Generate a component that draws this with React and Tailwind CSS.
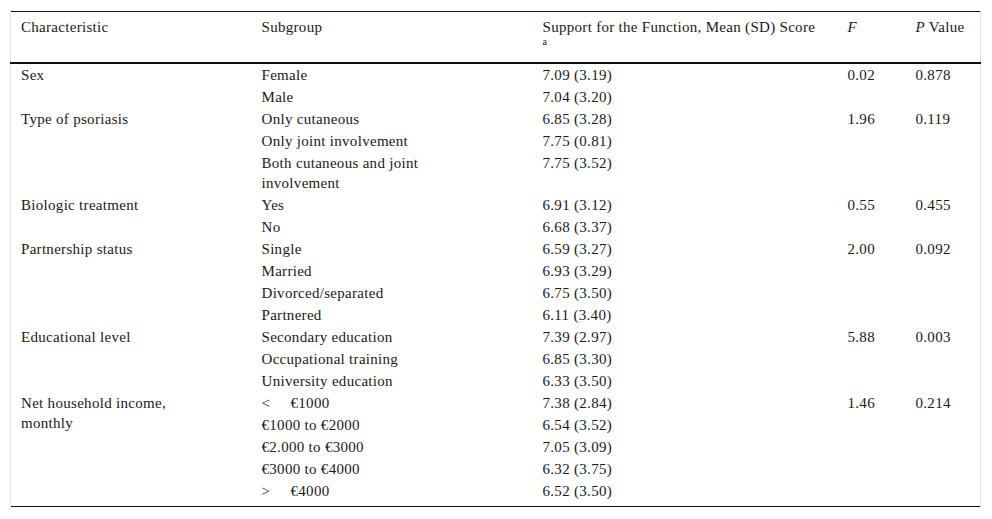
import React from 'react';

// Rows of the psoriasis support table
const groups = [
  {
    name: 'Sex',
    f: '0.02',
    p: '0.878',
    rows: [
      ['Female', '7.09 (3.19)'],
      ['Male', '7.04 (3.20)'],
    ],
  },
  {
    name: 'Type of psoriasis',
    f: '1.96',
    p: '0.119',
    rows: [
      ['Only cutaneous', '6.85 (3.28)'],
      ['Only joint involvement', '7.75 (0.81)'],
      ['Both cutaneous and joint involvement', '7.75 (3.52)'],
    ],
  },
  {
    name: 'Biologic treatment',
    f: '0.55',
    p: '0.455',
    rows: [
      ['Yes', '6.91 (3.12)'],
      ['No', '6.68 (3.37)'],
    ],
  },
  {
    name: 'Partnership status',
    f: '2.00',
    p: '0.092',
    rows: [
      ['Single', '6.59 (3.27)'],
      ['Married', '6.93 (3.29)'],
      ['Divorced/separated', '6.75 (3.50)'],
      ['Partnered', '6.11 (3.40)'],
    ],
  },
  {
    name: 'Educational level',
    f: '5.88',
    p: '0.003',
    rows: [
      ['Secondary education', '7.39 (2.97)'],
      ['Occupational training', '6.85 (3.30)'],
      ['University education', '6.33 (3.50)'],
    ],
  },
  {
    name: 'Net household income, monthly',
    f: '1.46',
    p: '0.214',
    rows: [
      [{ sign: '<', amount: '€1000' }, '7.38 (2.84)'],
      ['€1000 to €2000', '6.54 (3.52)'],
      ['€2.000 to €3000', '7.05 (3.09)'],
      ['€3000 to €4000', '6.32 (3.75)'],
      [{ sign: '>', amount: '€4000' }, '6.52 (3.50)'],
    ],
  },
];

const Subgroup = ({ value }) => {
  if (typeof value === 'string') return <div className="max-w-[190px]">{value}</div>;
  return (
    <div>
      <span className="inline-block w-[29px]">{value.sign}</span>
      {value.amount}
    </div>
  );
};

const App = () => {
  const lastGroup = groups.length - 1;

  return (
    <div
      className="min-h-[519px] w-[992px] bg-white pl-[10px] pt-[11px] text-[15px] tracking-[0.3px] text-[#1a1a1a]"
      style={{ fontFamily: '"Liberation Serif", "Times New Roman", serif' }}
    >
      <table className="w-[970px] table-fixed border-collapse">
        <colgroup>
          <col className="w-[241px]" />
          <col className="w-[281px]" />
          <col className="w-[305px]" />
          <col className="w-[68px]" />
          <col className="w-[75px]" />
        </colgroup>
        <thead>
          <tr className="h-[51px] border-t border-t-[#111] border-b-2 border-b-[#111] align-top leading-5">
            <th className="border-l border-l-[#e4e4e4] pl-[10px] pt-[5px] text-left font-normal">Characteristic</th>
            <th className="pl-[10px] pt-[5px] text-left font-normal">Subgroup</th>
            <th className="pl-[10px] pt-[5px] text-left font-normal">
              Support for the Function, Mean (SD) Score
              <span className="block text-[10px] leading-[10px] tracking-normal">a</span>
            </th>
            <th className="pl-[10px] pt-[5px] text-left font-normal italic">F</th>
            <th className="border-r border-r-[#e4e4e4] pl-[10px] pt-[5px] text-left font-normal">
              <i>P</i> Value
            </th>
          </tr>
        </thead>
        <tbody className="border-b-[1.5px] border-b-[#111]">
          {groups.map((group, gi) =>
            group.rows.map(([sub, score], ri) => {
              const first = ri === 0;
              const span = group.rows.length;
              const last = gi === lastGroup && ri === span - 1;
              const pad = last ? 'pt-px pb-[5px]' : 'py-px';
              return (
                <tr key={`${gi}-${ri}`} className="align-top leading-5">
                  {first && (
                    <td rowSpan={span} className="border-l border-l-[#e4e4e4] py-px pl-[10px]">
                      <div className="max-w-[170px]">{group.name}</div>
                    </td>
                  )}
                  <td className={`pl-[10px] ${pad}`}>
                    <Subgroup value={sub} />
                  </td>
                  <td className={`pl-[10px] ${pad}`}>{score}</td>
                  {first && (
                    <td rowSpan={span} className="py-px pl-[10px]">
                      {group.f}
                    </td>
                  )}
                  {first && (
                    <td rowSpan={span} className="border-r border-r-[#e4e4e4] py-px pl-[10px]">
                      {group.p}
                    </td>
                  )}
                </tr>
              );
            })
          )}
        </tbody>
      </table>
    </div>
  );
};

export default App;
